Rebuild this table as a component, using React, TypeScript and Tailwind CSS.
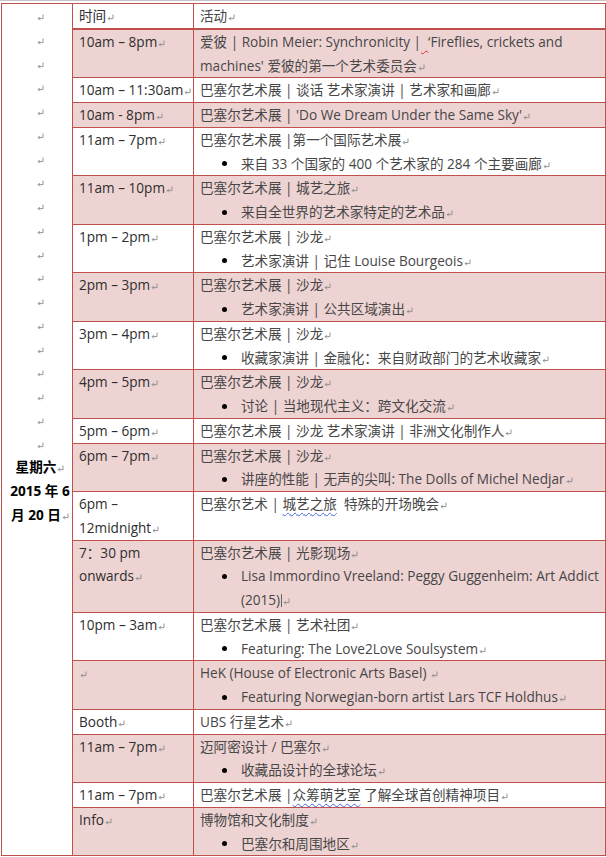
import type { ReactNode } from "react";

// Word-style paragraph mark
function Pm() {
  return (
    <svg
      viewBox="0 0 7 7"
      className="ml-[1px] inline-block h-[7px] w-[7px] align-[0px]"
      fill="none"
      stroke="#8a8a8a"
      strokeWidth="0.9"
    >
      <path d="M6 0.5V4.6H1.2" />
      <path d="M2.9 2.9L1.2 4.6L2.9 6.3" />
    </svg>
  );
}

function Bullet({ children }: { children: ReactNode }) {
  return (
    <div className="flex">
      <span className="ml-[22px] mt-[9.5px] h-[5px] w-[5px] shrink-0 rounded-full bg-black" />
      <div className="ml-[14px] whitespace-nowrap">{children}</div>
    </div>
  );
}

function Row({ pink, time, children }: { pink?: boolean; time: ReactNode; children: ReactNode }) {
  const bg = pink ? "bg-[#eed3d3]" : "bg-white";
  return (
    <tr>
      <td className={`${bg} border-b border-r border-[#c0504d] px-[6px] align-top whitespace-nowrap text-[#2e2e2e]`}>
        {time}
      </td>
      <td className={`${bg} border-b border-r border-[#c0504d] px-[6px] align-top text-[#474747]`}>{children}</td>
    </tr>
  );
}

function Line({ children }: { children: ReactNode }) {
  return <div className="whitespace-nowrap">{children}</div>;
}

const blueWave = "underline decoration-wavy decoration-[#4169e1] decoration-1 underline-offset-[3px]";

export default function App() {
  return (
    <div className="h-[857px] w-[606px] overflow-hidden bg-white font-['Open_Sans','Noto_Sans_CJK_SC',sans-serif] text-[13.6px] leading-[23.75px]">
      <div className="h-px bg-[#c6c6c6]" />
      <div className="pl-[1px] pt-[2px]">
        <table className="w-[605px] table-fixed border-separate border-spacing-0 border-l border-t border-[#c0504d]">
          <colgroup>
            <col className="w-[71px]" />
            <col className="w-[121px]" />
            <col className="w-[412px]" />
          </colgroup>
          <tbody>
            <tr>
              <td rowSpan={20} className="border-b border-r border-[#c0504d] pl-[6px] align-top text-center">
                {Array.from({ length: 19 }).map((_, i) => (
                  <div key={i} className="h-[23.75px]">
                    <Pm />
                  </div>
                ))}
                <div className="font-bold text-black">
                  星期六
                  <Pm />
                  <br />
                  2015 年 6
                  <br />月 20 日
                  <Pm />
                </div>
              </td>
              <td className="border-b-2 border-r border-[#c0504d] px-[6px] align-top text-[#2e2e2e]">
                时间
                <Pm />
              </td>
              <td className="border-b-2 border-r border-[#c0504d] px-[6px] align-top text-[#474747]">
                活动
                <Pm />
              </td>
            </tr>

            <Row pink time={<>10am – 8pm<Pm /></>}>
              <Line>
                爱彼 | Robin Meier: Synchronicity |
                <span className="underline decoration-wavy decoration-[#e03030] decoration-1 underline-offset-[3px]">
                  {"\u00a0\u00a0"}
                </span>
                ‘Fireflies, crickets and
              </Line>
              <Line>
                machines' 爱彼的第一个艺术委员会
                <Pm />
              </Line>
            </Row>

            <Row time={<>10am – 11:30am<Pm /></>}>
              <Line>
                巴塞尔艺术展 | 谈话 艺术家演讲 | 艺术家和画廊
                <Pm />
              </Line>
            </Row>

            <Row pink time={<>10am - 8pm<Pm /></>}>
              <Line>
                巴塞尔艺术展 | 'Do We Dream Under the Same Sky'
                <Pm />
              </Line>
            </Row>

            <Row time={<>11am – 7pm<Pm /></>}>
              <Line>
                巴塞尔艺术展 |第一个国际艺术展
                <Pm />
              </Line>
              <Bullet>
                来自 33 个国家的 400 个艺术家的 284 个主要画廊
                <Pm />
              </Bullet>
            </Row>

            <Row pink time={<>11am – 10pm<Pm /></>}>
              <Line>
                巴塞尔艺术展 | 城艺之旅
                <Pm />
              </Line>
              <Bullet>
                来自全世界的艺术家特定的艺术品
                <Pm />
              </Bullet>
            </Row>

            <Row time={<>1pm – 2pm<Pm /></>}>
              <Line>
                巴塞尔艺术展 | 沙龙
                <Pm />
              </Line>
              <Bullet>
                艺术家演讲 | 记住 Louise Bourgeois
                <Pm />
              </Bullet>
            </Row>

            <Row pink time={<>2pm – 3pm<Pm /></>}>
              <Line>
                巴塞尔艺术展 | 沙龙
                <Pm />
              </Line>
              <Bullet>
                艺术家演讲 | 公共区域演出
                <Pm />
              </Bullet>
            </Row>

            <Row time={<>3pm – 4pm<Pm /></>}>
              <Line>
                巴塞尔艺术展 | 沙龙
                <Pm />
              </Line>
              <Bullet>
                收藏家演讲 | 金融化：来自财政部门的艺术收藏家
                <Pm />
              </Bullet>
            </Row>

            <Row pink time={<>4pm – 5pm<Pm /></>}>
              <Line>
                巴塞尔艺术展 | 沙龙
                <Pm />
              </Line>
              <Bullet>
                讨论 | 当地现代主义：跨文化交流
                <Pm />
              </Bullet>
            </Row>

            <Row time={<>5pm – 6pm<Pm /></>}>
              <Line>
                巴塞尔艺术展 | 沙龙 艺术家演讲 | 非洲文化制作人
                <Pm />
              </Line>
            </Row>

            <Row pink time={<>6pm – 7pm<Pm /></>}>
              <Line>
                巴塞尔艺术展 | 沙龙
                <Pm />
              </Line>
              <Bullet>
                讲座的性能 | 无声的尖叫: The Dolls of Michel Nedjar
                <Pm />
              </Bullet>
            </Row>

            <Row
              time={
                <>
                  6pm –
                  <br />
                  12midnight
                  <Pm />
                </>
              }
            >
              <Line>
                巴塞尔艺术 | <span className={blueWave}>城艺之旅</span>
                {"\u00a0 "}特殊的开场晚会
                <Pm />
              </Line>
            </Row>

            <Row
              pink
              time={
                <>
                  7：30 pm
                  <br />
                  onwards
                  <Pm />
                </>
              }
            >
              <Line>
                巴塞尔艺术展 | 光影现场
                <Pm />
              </Line>
              <Bullet>
                Lisa Immordino Vreeland: Peggy Guggenheim: Art Addict
                <br />
                (2015)
                <span className="ml-[1px] inline-block h-[13px] w-px bg-[#666] align-[-2px]" />
                <Pm />
              </Bullet>
            </Row>

            <Row time={<>10pm – 3am<Pm /></>}>
              <Line>
                巴塞尔艺术展 | 艺术社团
                <Pm />
              </Line>
              <Bullet>
                Featuring: The Love2Love Soulsystem
                <Pm />
              </Bullet>
            </Row>

            <Row pink time={<Pm />}>
              <Line>
                HeK (House of Electronic Arts Basel) <Pm />
              </Line>
              <Bullet>
                Featuring Norwegian-born artist Lars TCF Holdhus
                <Pm />
              </Bullet>
            </Row>

            <Row time={<>Booth<Pm /></>}>
              <Line>
                UBS 行星艺术
                <Pm />
              </Line>
            </Row>

            <Row pink time={<>11am – 7pm<Pm /></>}>
              <Line>
                迈阿密设计 / 巴塞尔
                <Pm />
              </Line>
              <Bullet>
                收藏品设计的全球论坛
                <Pm />
              </Bullet>
            </Row>

            <Row time={<>11am – 7pm<Pm /></>}>
              <Line>
                巴塞尔艺术展 |<span className={blueWave}>众筹萌艺室</span> 了解全球首创精神项目
                <Pm />
              </Line>
            </Row>

            <Row pink time={<>Info<Pm /></>}>
              <Line>
                博物馆和文化制度
                <Pm />
              </Line>
              <Bullet>
                巴塞尔和周围地区
                <Pm />
              </Bullet>
            </Row>
          </tbody>
        </table>
      </div>
    </div>
  );
}
